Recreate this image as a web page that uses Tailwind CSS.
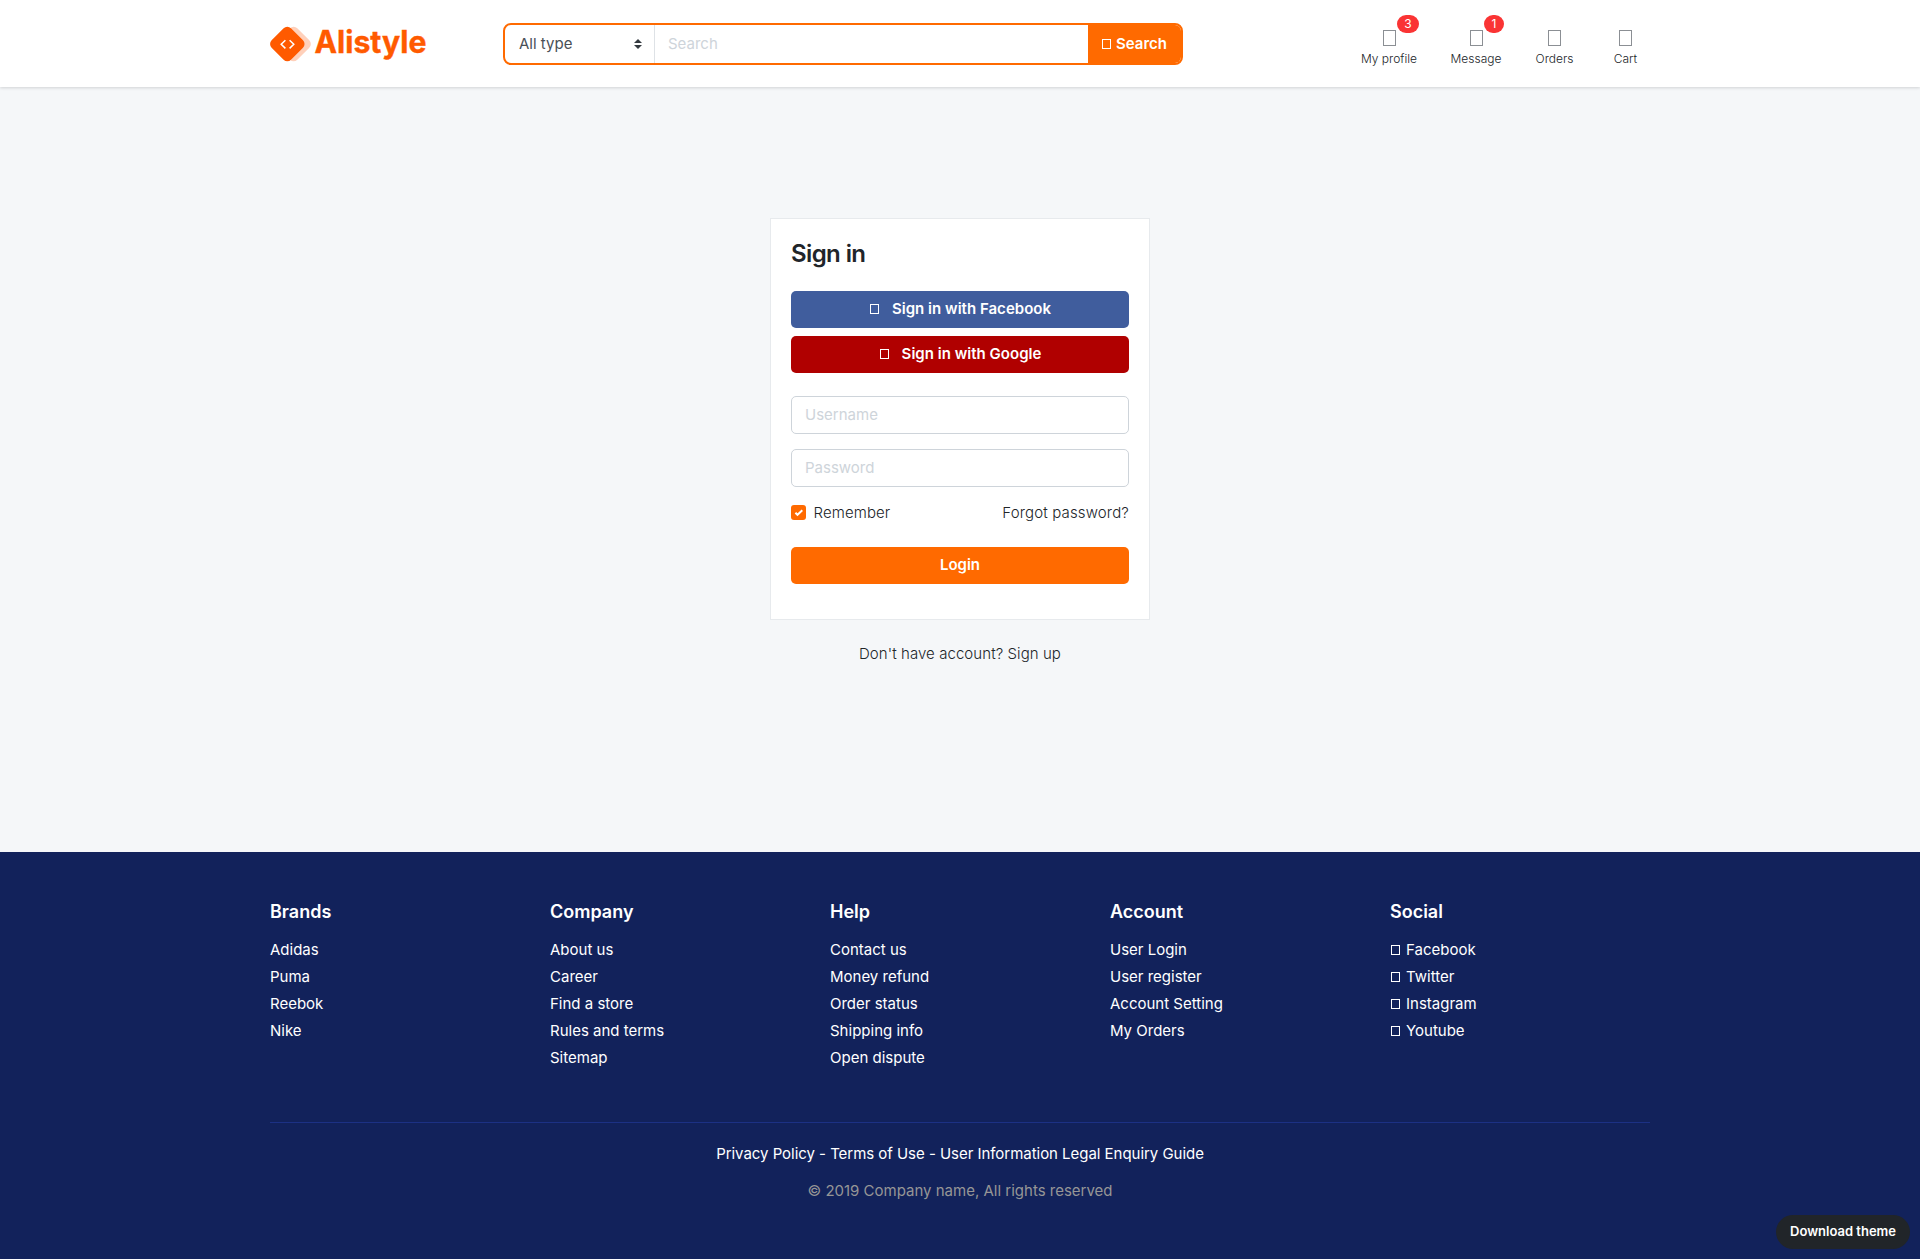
<!DOCTYPE html>
<html lang="en">
<head>
<meta charset="utf-8">
<title>Alistyle - Sign in</title>
<script src="https://cdn.jsdelivr.net/npm/@tailwindcss/browser@4"></script>
</head>
<body class="flex min-h-[1259px] flex-col bg-[#f5f7f9] font-['Inter',sans-serif] text-[15px] leading-[23px] font-light text-[#212529]">
<header class="h-[87px] shrink-0 bg-white shadow-[0_1px_3px_rgba(0,0,0,0.15)]">
  <div class="mx-auto flex h-full w-[1380px] items-center">
    <a href="#" class="flex h-11 w-[157px] items-center">
      <svg width="157" height="44" viewBox="0 0 157 44" class="shrink-0 overflow-visible" role="img" aria-label="Alistyle">
        <rect x="9.9" y="8.3" width="27.4" height="27.4" rx="5.2" transform="rotate(45 23.6 22)" fill="#ffd0ba"/>
        <rect x="3.6" y="8.3" width="27.4" height="27.4" rx="5.2" transform="rotate(45 17.3 22)" fill="#ff5a00"/>
        <path d="M15.4 18.2 L11.2 22.3 L15.4 26.4 M19.6 18.2 L23.8 22.3 L19.6 26.4" fill="none" stroke="#fff" stroke-width="1.5"/>
        <text x="44.5" y="31.2" textLength="112" lengthAdjust="spacingAndGlyphs" font-family="Inter" font-size="31" font-weight="700" fill="#ff5a00" stroke="#ff5a00" stroke-width="0.4">Alistyle</text>
      </svg>
    </a>
    <form class="ml-[76px] flex h-[42px] w-[680px] overflow-hidden rounded-[8px] border-2 border-[#ff6a00] bg-white">
      <div class="flex w-[150px] items-center justify-between border-r border-[#dee2e6] pr-3 pl-[14px] font-normal text-[#495057]">
        <span>All type</span>
        <svg width="8" height="10" viewBox="0 0 4 5" fill="#343a40"><path d="M2 0L0 2h4zm0 5L0 3h4z"/></svg>
      </div>
      <div class="flex flex-1 items-center pl-[13px] font-normal text-[#ced4da]">Search</div>
      <button type="button" class="flex w-[93px] items-center bg-[#ff6a00] pl-[14px] font-semibold text-white"><span class="mr-[5px] h-[10px] w-[9px] border border-current"></span>Search</button>
    </form>
    <nav class="ml-[177px] flex pt-[11px] text-[12px] leading-[18px] font-light text-[#212529]">
      <a href="#" class="relative flex w-[58px] flex-col items-center whitespace-nowrap"><span class="mb-[4px] h-4 w-[13px] border border-[#8b8f94]"></span>My profile<span class="absolute -top-[15px] left-[37px] flex h-[18px] w-[22px] items-center justify-center rounded-full bg-[#fa3434] font-normal text-white">3</span></a>
      <a href="#" class="relative ml-[32px] flex w-[52px] flex-col items-center"><span class="mb-[4px] h-4 w-[13px] border border-[#8b8f94]"></span>Message<span class="absolute -top-[15px] left-[34px] flex h-[18px] w-[20px] items-center justify-center rounded-full bg-[#fa3434] font-normal text-white">1</span></a>
      <a href="#" class="ml-[33px] flex w-[39px] flex-col items-center"><span class="mb-[4px] h-4 w-[13px] border border-[#8b8f94]"></span>Orders</a>
      <a href="#" class="ml-[39px] flex w-[25px] flex-col items-center"><span class="mb-[4px] h-4 w-[13px] border border-[#8b8f94]"></span>Cart</a>
    </nav>
  </div>
</header>
<main class="h-[765px] shrink-0 pt-[131px]">
  <section class="mx-auto h-[402px] w-[380px] border border-[#e7eaed] bg-white px-5 pt-5">
    <h1 class="text-[24px] leading-[29px] font-semibold tracking-[-0.6px]">Sign in</h1>
    <a href="#" class="mt-[23px] flex h-[37px] items-center justify-center rounded-[5px] bg-[#405d9d] pb-[2px] pl-px font-semibold tracking-[0.02px] text-white"><span class="mr-[13px] h-[10px] w-[9px] border border-current"></span>Sign in with Facebook</a>
    <a href="#" class="mt-2 flex h-[37px] items-center justify-center rounded-[5px] bg-[#b00000] pb-[2px] pl-px font-semibold tracking-[0.02px] text-white"><span class="mr-[13px] h-[10px] w-[9px] border border-current"></span>Sign in with Google</a>
    <div class="mt-[23px] flex h-[38px] items-center rounded-[5px] border border-[#ced4da] pb-px pl-[13px] font-normal text-[#ced4da]">Username</div>
    <div class="mt-[15px] flex h-[38px] items-center rounded-[5px] border border-[#ced4da] pb-px pl-[13px] font-normal text-[#ced4da]">Password</div>
    <div class="mt-[14px] flex items-center justify-between">
      <label class="flex items-center gap-[7.5px]"><svg width="15" height="15" viewBox="0 0 15 15"><rect width="15" height="15" rx="3" fill="#ff6a00"/><path d="M4.4 7.7l2.1 2.1 4.8-4.5" fill="none" stroke="#fff" stroke-width="2"/></svg><span class="tracking-[0.1px]">Remember</span></label>
      <a href="#" class="tracking-[0.15px]">Forgot password?</a>
    </div>
    <button type="button" class="mt-[23px] h-[37px] w-full rounded-[5px] bg-[#ff6a00] pb-[2px] font-semibold text-white">Login</button>
  </section>
  <p class="mt-[22px] text-center tracking-[0.07px]">Don't have account? Sign up</p>
</main>
<footer class="h-[407px] shrink-0 bg-[#12225b] font-normal text-white">
  <div class="mx-auto w-[1380px]">
    <div class="flex h-[271px] border-b border-[#1c3184] pt-[49px]">
      <section class="w-[280px]"><h2 class="mb-[15px] text-[18px] leading-[22px] font-semibold">Brands</h2><ul class="flex flex-col gap-1"><li>Adidas</li><li>Puma</li><li>Reebok</li><li>Nike</li></ul></section>
      <section class="w-[280px]"><h2 class="mb-[15px] text-[18px] leading-[22px] font-semibold">Company</h2><ul class="flex flex-col gap-1"><li>About us</li><li>Career</li><li>Find a store</li><li>Rules and terms</li><li>Sitemap</li></ul></section>
      <section class="w-[280px]"><h2 class="mb-[15px] text-[18px] leading-[22px] font-semibold">Help</h2><ul class="flex flex-col gap-1"><li>Contact us</li><li>Money refund</li><li>Order status</li><li>Shipping info</li><li>Open dispute</li></ul></section>
      <section class="w-[280px]"><h2 class="mb-[15px] text-[18px] leading-[22px] font-semibold">Account</h2><ul class="flex flex-col gap-1"><li>User Login</li><li>User register</li><li>Account Setting</li><li>My Orders</li></ul></section>
      <section><h2 class="mb-[15px] text-[18px] leading-[22px] font-semibold">Social</h2>
        <ul class="flex flex-col gap-1">
          <li class="flex items-center"><span class="mr-[6px] ml-px h-[10px] w-[9px] border border-current"></span>Facebook</li>
          <li class="flex items-center"><span class="mr-[6px] ml-px h-[10px] w-[9px] border border-current"></span>Twitter</li>
          <li class="flex items-center"><span class="mr-[6px] ml-px h-[10px] w-[9px] border border-current"></span>Instagram</li>
          <li class="flex items-center"><span class="mr-[6px] ml-px h-[10px] w-[9px] border border-current"></span>Youtube</li>
        </ul>
      </section>
    </div>
    <p class="mt-[19px] text-center tracking-[-0.035px]">Privacy Policy - Terms of Use - User Information Legal Enquiry Guide</p>
    <p class="mt-[14px] text-center text-[#969696]">© 2019 Company name, All rights reserved</p>
  </div>
</footer>
<a href="#" class="fixed right-[10px] bottom-[10px] flex h-[34px] w-[134px] items-center justify-center rounded-full bg-[#212529] pb-px text-[13px] font-semibold text-white">Download theme</a>
</body>
</html>
